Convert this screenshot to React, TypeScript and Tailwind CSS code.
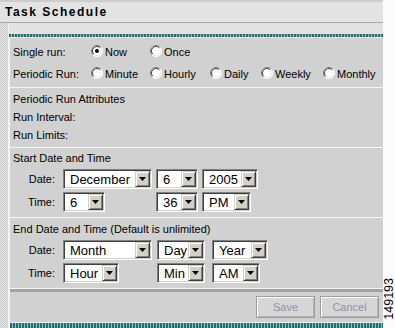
import React from "react";

function Radio({ checked }: { checked?: boolean }) {
  return (
    <svg width="12" height="12" viewBox="0 0 12 12" className="shrink-0 -mt-[2px]">
      <circle cx="6" cy="6" r="5.5" fill="#ffffff" />
      <path d="M2.1 9.9 A5.5 5.5 0 0 1 9.9 2.1" fill="none" stroke="#808080" strokeWidth="1" />
      <path d="M2.8 9.2 A4.5 4.5 0 0 1 9.2 2.8" fill="none" stroke="#404040" strokeWidth="1" />
      <path d="M9.9 2.1 A5.5 5.5 0 0 1 2.1 9.9" fill="none" stroke="#ffffff" strokeWidth="1" />
      <path d="M9.2 2.8 A4.5 4.5 0 0 1 2.8 9.2" fill="none" stroke="#e4e4e4" strokeWidth="1" />
      {checked && <circle cx="6" cy="6" r="2" fill="#000000" />}
    </svg>
  );
}

function Opt({ label, checked, cls }: { label: string; checked?: boolean; cls: string }) {
  return (
    <div className={`flex items-center gap-[2px] ${cls}`}>
      <Radio checked={checked} />
      <span>{label}</span>
    </div>
  );
}

function Sel({ text, cls }: { text: string; cls: string }) {
  return (
    <div
      className={`flex h-[20px] shrink-0 bg-white border border-t-[#808080] border-l-[#808080] border-b-white border-r-white shadow-[inset_1px_1px_0_#404040,inset_-1px_-1px_0_#d4d0c8] ${cls}`}
    >
      <div className="flex flex-1 items-center pl-[6px] text-[13px] leading-none text-black">{text}</div>
      <div className="my-[1px] mr-[1px] flex w-[15px] items-center justify-center bg-[#d4d0c8] border border-t-[#d4d0c8] border-l-[#d4d0c8] border-b-[#404040] border-r-[#404040] shadow-[inset_1px_1px_0_#ffffff,inset_-1px_-1px_0_#808080]">
        <svg width="7" height="4" viewBox="0 0 7 4">
          <polygon points="0,0 7,0 3.5,4" fill="#000000" />
        </svg>
      </div>
    </div>
  );
}

function Btn({ label }: { label: string }) {
  return (
    <div className="flex h-[22px] w-[59px] items-center justify-center bg-[#d6d6d6] border border-[#9c9c9c] shadow-[inset_1px_1px_0_#ffffff,inset_-1px_-1px_0_#b4b4b4] text-[11px] text-[#8a94aa]">
      {label}
    </div>
  );
}

function Sep() {
  return <div className="h-px bg-[#f6f6f6]" />;
}

export default function App() {
  return (
    <div className="flex h-[328px] w-[395px] overflow-hidden bg-white font-['Liberation_Sans',Arial,sans-serif] text-[11px] text-black">
      <div className="flex w-[383px] flex-col">
        <div className="flex h-[23px] shrink-0 items-center border-t-2 border-b border-t-[#cccccc] border-b-[#a8a8a8] bg-[#e3e3e3] pl-[5px]">
          <span className="text-[12px] font-bold tracking-[1.5px]">Task Schedule</span>
        </div>
        <div className="flex flex-1">
          <div className="w-[8px] [background:repeating-conic-gradient(#c2c2c2_0_25%,#eeeeee_0_50%)_0_0/2px_2px]" />
          <div className="w-px bg-[#f4f4f4]" />
          <div className="flex flex-1 flex-col bg-[#e2e2e2]">
            <div className="h-[11px]" />
            <div className="h-[3px] [background:repeating-linear-gradient(90deg,#21706e_0_2px,#8cc6c4_2px_3px)]" />
            <div className="flex flex-1 flex-col border-t border-l border-[#f6f6f6] bg-[#d1d1d1]">
              {/* Section 1 */}
              <div className="flex flex-col pt-[3px] pb-[2px] pl-[3px]">
                <div className="flex h-[22px] items-center">
                  <div className="w-[78px]">Single run:</div>
                  <Opt label="Now" checked cls="w-[59px]" />
                  <Opt label="Once" cls="w-[60px]" />
                </div>
                <div className="flex h-[22px] items-center">
                  <div className="w-[78px]">Periodic Run:</div>
                  <Opt label="Minute" cls="w-[59px]" />
                  <Opt label="Hourly" cls="w-[60px]" />
                  <Opt label="Daily" cls="w-[51px]" />
                  <Opt label="Weekly" cls="w-[62px]" />
                  <Opt label="Monthly" cls="" />
                </div>
              </div>
              <Sep />
              {/* Section 2 */}
              <div className="flex flex-col pt-[2px] pb-[3px] pl-[3px]">
                <div className="flex h-[18px] items-center">Periodic Run Attributes</div>
                <div className="flex h-[18px] items-center">Run Interval:</div>
                <div className="flex h-[18px] items-center">Run Limits:</div>
              </div>
              <Sep />
              {/* Section 3 */}
              <div className="flex flex-col pt-px pb-[5px]">
                <div className="flex h-[18px] items-center pl-[3px]">Start Date and Time</div>
                <div className="mt-[2px] flex h-[20px] items-center">
                  <div className="w-[46px] pr-px text-right">Date:</div>
                  <Sel text="December" cls="ml-[7px] w-[89px]" />
                  <Sel text="6" cls="ml-[4px] w-[42px]" />
                  <Sel text="2005" cls="ml-[4px] w-[56px]" />
                </div>
                <div className="mt-[3px] flex h-[20px] items-center">
                  <div className="w-[46px] pr-px text-right">Time:</div>
                  <Sel text="6" cls="ml-[7px] w-[42px]" />
                  <Sel text="36" cls="ml-[51px] w-[42px]" />
                  <Sel text="PM" cls="ml-[4px] w-[49px]" />
                </div>
              </div>
              <Sep />
              {/* Section 4 */}
              <div className="flex flex-col pt-[2px] pb-[5px]">
                <div className="flex h-[18px] items-center pl-[3px]">End Date and Time (Default is unlimited)</div>
                <div className="mt-[2px] flex h-[20px] items-center">
                  <div className="w-[46px] pr-px text-right">Date:</div>
                  <Sel text="Month" cls="ml-[7px] w-[89px]" />
                  <Sel text="Day" cls="ml-[5px] w-[48px]" />
                  <Sel text="Year" cls="ml-[7px] w-[56px]" />
                </div>
                <div className="mt-[3px] flex h-[20px] items-center">
                  <div className="w-[46px] pr-px text-right">Time:</div>
                  <Sel text="Hour" cls="ml-[7px] w-[56px]" />
                  <Sel text="Min" cls="ml-[38px] w-[48px]" />
                  <Sel text="AM" cls="ml-[7px] w-[48px]" />
                </div>
              </div>
              <div className="h-px bg-[#f6f6f6]" />
              <div className="h-[3px] bg-[#a2a2a2]" />
              {/* Buttons */}
              <div className="flex justify-end gap-[5px] pt-[4px] pb-[4px] pr-[4px]">
                <Btn label="Save" />
                <Btn label="Cancel" />
              </div>
              <div className="h-px bg-[#f6f6f6]" />
              <div className="h-[6px] shrink-0 [background:repeating-linear-gradient(90deg,#21706e_0_2px,#8cc6c4_2px_3px)]" />
            </div>
          </div>
        </div>
      </div>
      <div className="flex w-[12px] flex-col items-center justify-end pb-[8px] bg-[#fcfcfc]">
        <span className="rotate-180 text-[12.5px] leading-none [writing-mode:vertical-rl]">149193</span>
      </div>
    </div>
  );
}
